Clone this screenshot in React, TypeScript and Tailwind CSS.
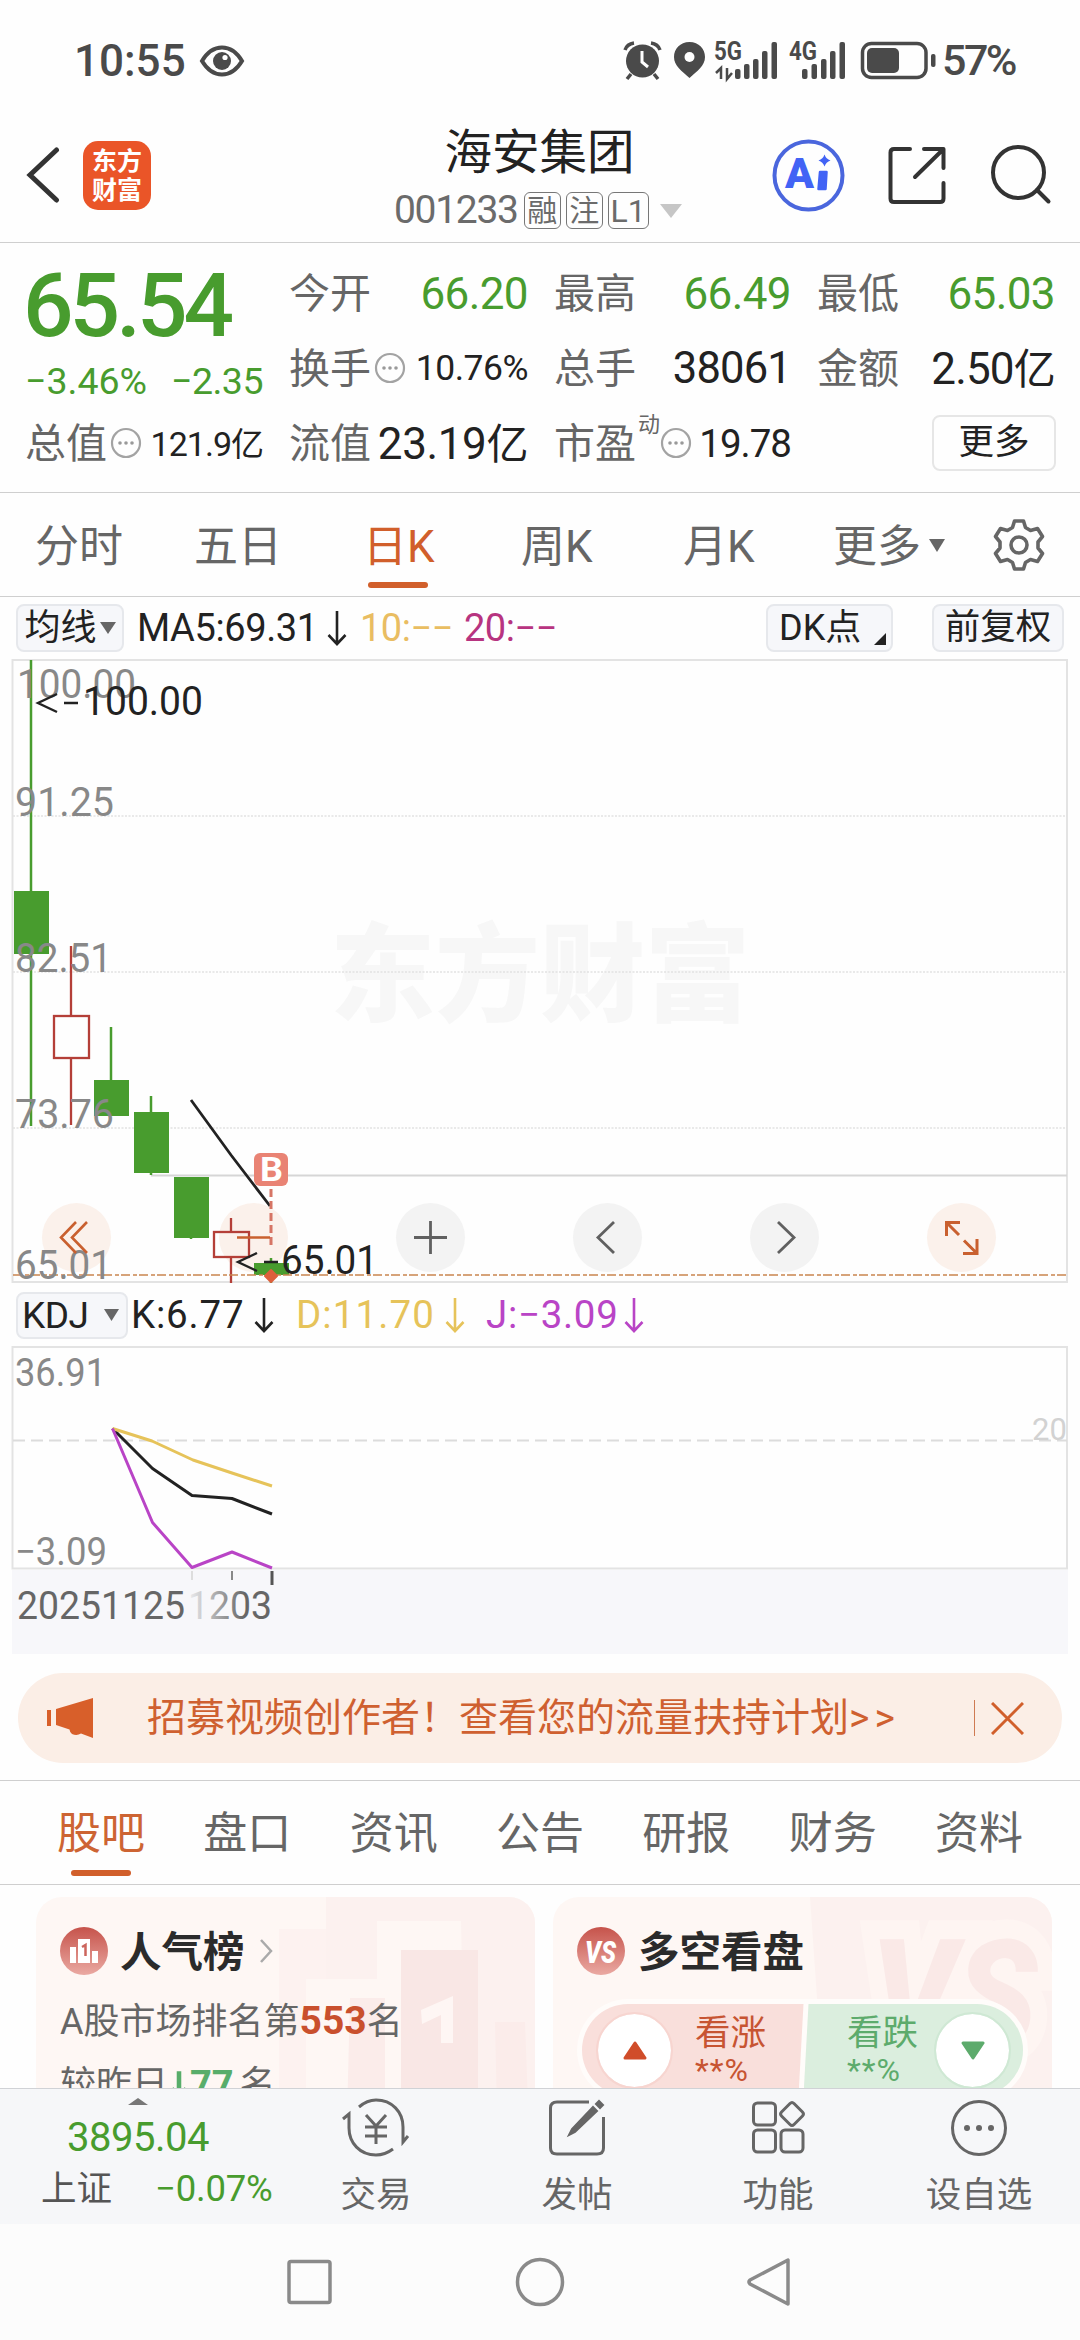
import type { ReactNode } from "react";

const MORE_DOTS = [10, 16, 22];

function Dots() {
  return (
    <svg className="h-8 w-8 shrink-0" viewBox="0 0 32 32" fill="none">
      <circle cx="16" cy="16" r="14" stroke="#a3a3a3" strokeWidth="2.2" />
      {MORE_DOTS.map((x) => (
        <circle key={x} cx={x} cy="16" r="1.8" fill="#999" />
      ))}
    </svg>
  );
}

function Caret({ className }: { className: string }) {
  return (
    <svg className={className} viewBox="0 0 16 12" preserveAspectRatio="none">
      <path d="M0 0H16L8 12Z" fill="currentColor" />
    </svg>
  );
}

function DownArrow() {
  return (
    <svg className="h-9 w-5 shrink-0" viewBox="0 0 20 36" fill="none" stroke="currentColor" strokeWidth="2.6">
      <path d="M10 1V34M1.500 25L10 34L18.500 25" />
    </svg>
  );
}

function StatusBar() {
  return (
    <div className="flex h-[84px] shrink-0 items-center pt-[37px] pl-[74px] text-[#4a4a4a]">
      <span className="text-[44px] leading-none font-medium">10:55</span>
      <svg className="ml-[13px] h-[32px] w-[46px]" viewBox="0 0 46 32" fill="none">
        <path d="M3 16C9 6 15 2.500 23 2.500S37 6 43 16C37 26 31 29.500 23 29.500S9 26 3 16Z" stroke="#4a4a4a" strokeWidth="4" />
        <circle cx="23" cy="16" r="9" fill="#4a4a4a" />
        <circle cx="26" cy="12.500" r="2.600" fill="#fff" />
      </svg>
      <svg className="ml-auto h-[44px] w-[318px]" viewBox="620 38 318 44" fill="#4a4a4a">
        {/* alarm */}
        <circle cx="640.500" cy="60" r="16.500" />
        <path d="M623 49Q625 43 632 42M658 49Q656 43 649 42M629 73L625 78M652 73L656 78" stroke="#4a4a4a" strokeWidth="3.500" fill="none" />
        <path d="M640 50V61L646 66" stroke="#fff" strokeWidth="3" fill="none" />
        {/* location */}
        <path d="M687.500 41C678 41 672 48 672 56C672 65 680 70 687.500 77C695 70 703 65 703 56C703 48 697 41 687.500 41Z" />
        <circle cx="687.500" cy="56" r="5" fill="#fff" />
        {/* signals */}
        <text x="712" y="59" fontSize="25" fontWeight="700" textLength="28" lengthAdjust="spacingAndGlyphs">5G</text>
        <path d="M714 72L719 67V78M730 72L725 78V67" stroke="#4a4a4a" strokeWidth="2.500" fill="none" />
        <rect x="733" y="68" width="5.500" height="10" rx="2" />
        <rect x="742" y="63" width="5.500" height="15" rx="2" />
        <rect x="751" y="58" width="5.500" height="20" rx="2" />
        <rect x="760" y="50" width="5.500" height="28" rx="2" />
        <rect x="769.500" y="41" width="5.500" height="37" rx="2" />
        <text x="787" y="59" fontSize="25" fontWeight="700" textLength="28" lengthAdjust="spacingAndGlyphs">4G</text>
        <rect x="800" y="68" width="5.500" height="10" rx="2" />
        <rect x="809.500" y="63" width="5.500" height="15" rx="2" />
        <rect x="819" y="58" width="5.500" height="20" rx="2" />
        <rect x="828" y="50" width="5.500" height="28" rx="2" />
        <rect x="837.500" y="41" width="5.500" height="37" rx="2" />
        {/* battery */}
        <rect x="860.500" y="42.500" width="63.500" height="34" rx="9" fill="none" stroke="#4a4a4a" strokeWidth="3.500" />
        <rect x="865" y="47" width="32" height="25" rx="5" />
        <rect x="929" y="53" width="4.500" height="13" rx="2" />
      </svg>
      <span className="mr-[65px] ml-[2px] text-[43px] leading-none font-medium tracking-[-2.5px]">57%</span>
    </div>
  );
}

function Tag({ children, wide }: { children: ReactNode; wide?: boolean }) {
  return (
    <span
      className={
        wide
          ? "flex h-[37px] w-[41px] items-center justify-center rounded-md border-[1.5px] border-[#777] text-[32px] leading-none"
          : "flex h-[37px] w-[37px] items-center justify-center rounded-md border-[1.5px] border-[#777] text-[30px] leading-none"
      }
    >
      {children}
    </span>
  );
}

function Header() {
  return (
    <div className="flex h-[159px] shrink-0 border-b border-[#cfcfcf]">
      <svg className="mt-[63px] ml-[26px] h-[56px] w-[34px]" viewBox="0 0 34 56" fill="none">
        <path d="M30.500 3L4 28L30.500 53" stroke="#333" strokeWidth="5" strokeLinecap="round" />
      </svg>
      <div className="mt-[57px] ml-[23px] flex h-[69px] w-[68px] flex-col items-center justify-center rounded-[15px] bg-[#ea5528] text-[25px] leading-[29px] font-bold text-white">
        <span>东方</span>
        <span>财富</span>
      </div>
      <div className="ml-[228px] flex w-[321px] flex-col items-center">
        <span className="mt-[45px] text-[47.5px] leading-[48px] text-[#222]">海安集团</span>
        <div className="mt-[14px] flex items-center gap-[5px] self-start pl-[15px] text-[#6b6b6b]">
          <span className="mr-[1px] text-[39px] leading-none tracking-[-1.3px]">001233</span>
          <Tag>融</Tag>
          <Tag>注</Tag>
          <Tag wide>L1</Tag>
          <Caret className="ml-[6px] h-[14px] w-[22px] text-[#c6c6c6]" />
        </div>
      </div>
      <svg className="mt-[54px] ml-[72px] h-[74px] w-[74px]" viewBox="0 0 74 74" fill="none">
        <circle cx="36.500" cy="37.500" r="34" stroke="#4a66dd" strokeWidth="4" />
        <text x="13" y="50" fontSize="42" fontWeight="900" fill="#4263f5" textLength="29" lengthAdjust="spacingAndGlyphs">A</text>
        <path d="M48 34H54.500L53.500 51H46.500Z" fill="#4263f5" stroke="#4263f5" strokeWidth="2.500" strokeLinejoin="round" />
        <path d="M52.500 16.500Q54 21 58.500 22.500Q54 24 52.500 28.500Q51 24 46.500 22.500Q51 21 52.500 16.500Z" fill="#4263f5" />
      </svg>
      <svg className="mt-[61px] ml-[41px] h-[60px] w-[60px]" viewBox="0 0 60 60" fill="none" stroke="#333" strokeWidth="4">
        <path
          d="M23 4H7Q3.500 4 3.500 7.500V53.500Q3.500 57 7 57H53Q56.500 57 56.500 53.500V38M37 4H56.500V23M56 4.500L28 32"
          strokeLinejoin="round"
          strokeLinecap="round"
        />
      </svg>
      <svg className="mt-[60px] ml-[43px] h-[62px] w-[62px]" viewBox="0 0 62 62" fill="none" stroke="#333" strokeWidth="4">
        <circle cx="28.500" cy="28.500" r="25.500" />
        <path d="M47 46L58.500 57.500" strokeLinecap="round" />
      </svg>
    </div>
  );
}

function Quote({ label, children }: { label: string; children: ReactNode }) {
  return (
    <div className="flex items-center">
      <span className="shrink-0 pt-[4px] text-[41px] leading-none text-[#666]">{label}</span>
      {children}
    </div>
  );
}

function Quotes() {
  return (
    <div className="grid h-[250px] shrink-0 grid-cols-[238px_239px_237px_238px] grid-rows-[75px_75px_75px] gap-x-[26px] border-b border-[#cfcfcf] pt-[12px] pl-[25px] whitespace-nowrap">
      <div className="row-span-2 flex flex-col text-[#489c2e]">
        <span className="mt-[11px] -ml-[2px] text-[89px] leading-[80px] font-medium tracking-[-4px]">65.54</span>
        <div className="mt-[13px] flex justify-between text-[37.5px] leading-[44px]">
          <span>−3.46%</span>
          <span className="tracking-[-0.5px]">−2.35</span>
        </div>
      </div>
      <Quote label="今开">
        <span className="ml-auto pt-[3px] text-[44px] leading-none tracking-[-0.6px] text-[#489c2e]">66.20</span>
      </Quote>
      <Quote label="最高">
        <span className="ml-auto pt-[3px] text-[44px] leading-none tracking-[-0.6px] text-[#489c2e]">66.49</span>
      </Quote>
      <Quote label="最低">
        <span className="ml-auto pt-[3px] text-[44px] leading-none tracking-[-0.6px] text-[#489c2e]">65.03</span>
      </Quote>
      <Quote label="换手">
        <span className="ml-[3px] flex">
          <Dots />
        </span>
        <span className="ml-auto pt-[3px] text-[35.5px] leading-none tracking-[-0.5px] text-[#222]">10.76%</span>
      </Quote>
      <Quote label="总手">
        <span className="ml-auto pt-[3px] text-[43.5px] leading-none tracking-[-0.8px] text-[#222]">38061</span>
      </Quote>
      <Quote label="金额">
        <span className="ml-auto pt-[3px] text-[44px] leading-none tracking-[-0.8px] text-[#222]">
          2.50<span className="text-[42px]">亿</span>
        </span>
      </Quote>
      <Quote label="总值">
        <span className="ml-[3px] flex">
          <Dots />
        </span>
        <span className="ml-auto pt-[3px] text-[34px] leading-none tracking-[-1px] text-[#222]">
          121.9<span className="text-[33px]">亿</span>
        </span>
      </Quote>
      <Quote label="流值">
        <span className="ml-auto pt-[3px] text-[44px] leading-none tracking-[-0.4px] text-[#222]">
          23.19<span className="text-[42px]">亿</span>
        </span>
      </Quote>
      <Quote label="市盈">
        <span className="mb-[36px] ml-[2px] text-[22px] leading-none text-[#666]">动</span>
        <Dots />
        <span className="ml-auto pt-[3px] text-[38.5px] leading-none tracking-[-1px] text-[#222]">19.78</span>
      </Quote>
      <div className="-mr-px ml-auto flex h-[56px] w-[124px] items-center justify-center self-center rounded-lg border-2 border-[#e6e6e6] text-[35.5px] leading-none text-[#222]">
        更多
      </div>
    </div>
  );
}

function PeriodTabs() {
  return (
    <div className="flex h-[104px] shrink-0 border-b border-[#cfcfcf] pl-[35px] text-[44px] leading-[44px] text-[#666]">
      <span className="mt-[32px] w-[159px]">分时</span>
      <span className="mt-[32px] w-[169px]">五日</span>
      <div className="flex w-[158px] flex-col text-[#d15f2b]">
        <span className="mt-[32px]">日K</span>
        <span className="mt-[13px] ml-[5px] h-[6px] w-[60px] rounded-full bg-[#d15f2b]" />
      </div>
      <span className="mt-[32px] w-[162px]">周K</span>
      <span className="mt-[32px] w-[150px]">月K</span>
      <span className="mt-[32px]">更多</span>
      <Caret className="mt-[46px] ml-[8px] h-[13px] w-[16px] text-[#666]" />
      <svg className="mt-[25px] ml-[47px] h-[54px] w-[54px]" viewBox="0 0 54 54" fill="none" stroke="#666" strokeWidth="3.600">
        <path d="M22.500 3H31.500L33.500 9.500L38.500 12.500L45.500 10.500L50.500 18.500L46 24V30L50.500 35.500L45.500 43.500L38.500 41.500L33.500 44.500L31.500 51H22.500L20.500 44.500L15.500 41.500L8.500 43.500L3.500 35.500L8 30V24L3.500 18.500L8.500 10.500L15.500 12.500L20.500 9.500Z" strokeLinejoin="round" />
        <circle cx="27" cy="27" r="8" />
      </svg>
    </div>
  );
}

function MaRow() {
  return (
    <div className="flex h-[62px] shrink-0 items-center pr-[16px] pl-[16px] text-[38px] leading-none whitespace-nowrap text-[#222]">
      <div className="flex h-[48px] w-[108px] shrink-0 items-center justify-center gap-[3px] rounded-lg border-2 border-[#e6e8ec] bg-[#f6f7fa] text-[36px]">
        <span>均线</span>
        <Caret className="h-[12px] w-[16px] text-[#666]" />
      </div>
      <span className="ml-[13px] w-[190px] tracking-[-0.4px]">MA5:69.31</span>
      <DownArrow />
      <span className="ml-[13px] w-[104px] tracking-[-0.5px] text-[#e9bd62]">10:−−</span>
      <span className="tracking-[-0.5px] text-[#b73480]">20:−−</span>
      <div className="ml-auto flex h-[48px] w-[127px] items-center rounded-lg border-2 border-[#e6e8ec] bg-[#f6f7fa] pl-[11px] text-[36px]">
        <span>DK点</span>
        <svg className="mt-[22px] ml-auto mr-[5px] h-[12px] w-[12px]" viewBox="0 0 12 12">
          <path d="M12 0V12H0Z" fill="#222" />
        </svg>
      </div>
      <div className="ml-[39px] flex h-[48px] w-[132px] items-center justify-center rounded-lg border-2 border-[#e6e8ec] bg-[#f6f7fa] text-[35.5px]">
        前复权
      </div>
    </div>
  );
}

type Candle = { x: number; high: number; low: number; top: number; bottom: number; up?: boolean };

const candles: Candle[] = [
  { x: 31, high: 660, low: 1126, top: 891, bottom: 954 },
  { x: 71, high: 946, low: 1125, top: 1016, bottom: 1058, up: true },
  { x: 111, high: 1027, low: 1116, top: 1080, bottom: 1116 },
  { x: 151, high: 1096, low: 1175, top: 1112, bottom: 1173 },
  { x: 191, high: 1177, low: 1239, top: 1177, bottom: 1238 },
  { x: 231, high: 1218, low: 1283, top: 1232, bottom: 1257, up: true },
  { x: 271, high: 1258, low: 1283, top: 1263, bottom: 1275 },
];

const gridLines = [816, 972, 1128];

const priceLabels = [
  { text: "100.00", x: 17, y: 698, w: 119 },
  { text: "91.25", x: 15, y: 816, w: 99 },
  { text: "82.51", x: 15, y: 972, w: 97 },
  { text: "73.76", x: 15, y: 1128, w: 99 },
  { text: "65.01", x: 15, y: 1279, w: 97 },
];

const toolButtons = [
  { x: 76.5, warm: true },
  { x: 253.5, warm: true },
  { x: 430.5 },
  { x: 607.5 },
  { x: 784.5 },
  { x: 961.5, warm: true },
];

function KLineChart() {
  return (
    <svg className="h-[625px] w-full shrink-0" viewBox="0 659 1080 625" fill="none">
      <text x="330" y="1013" fontSize="107" fontWeight="900" fill="#f7f7f7" textLength="420" lengthAdjust="spacingAndGlyphs">
        东方财富
      </text>
      <rect x="12.500" y="660" width="1054.500" height="622" stroke="#e3e3e3" strokeWidth="2" />
      {gridLines.map((y) => (
        <path key={y} d={`M13 ${y}H1067`} stroke="#e2e2e2" strokeWidth="1.500" strokeDasharray="2 1.500" />
      ))}
      <path d="M151 1175.500H1067" stroke="#d6d6d6" strokeWidth="2" />
      {toolButtons.map(({ x, warm }) => (
        <circle key={x} cx={x} cy="1237.500" r="34.500" fill={warm ? "#fbf1eb" : "#f3f3f3"} />
      ))}

      {candles.map((c) =>
        c.up ? (
          <g key={c.x} stroke="#b43f38" strokeWidth="2.300">
            <path d={`M${c.x} ${c.high}V${c.top}M${c.x} ${c.bottom}V${c.low}`} />
            <rect x={c.x - 17} y={c.top} width="35" height={c.bottom - c.top} />
          </g>
        ) : (
          <g key={c.x}>
            <path d={`M${c.x} ${c.high}V${c.low}`} stroke="#489c2e" strokeWidth="2.500" />
            <rect x={c.x - 17} y={c.top} width="35" height={c.bottom - c.top} fill="#489c2e" />
          </g>
        ),
      )}
      <path d="M13 1275H1067" stroke="#c9854f" strokeWidth="1.600" strokeDasharray="9 3 4 2" />

      {priceLabels.map((l) => (
        <text key={l.text} x={l.x} y={l.y} fontSize="40" fill="#888" textLength={l.w} lengthAdjust="spacingAndGlyphs">
          {l.text}
        </text>
      ))}
      <path d="M191 1100L231 1155L270 1206" stroke="#222" strokeWidth="2.800" />

      {/* buy marker */}
      <path d="M271 1189V1246" stroke="#d67565" strokeWidth="3" strokeDasharray="8 4" />
      <rect x="254" y="1153" width="34" height="33" rx="6" fill="#e98374" />
      <text x="260" y="1181" fontSize="33" fontWeight="700" fill="#fff" textLength="23" lengthAdjust="spacingAndGlyphs">B</text>
      <path d="M271 1270L277 1276L271 1282L265 1276Z" fill="#dd5f3c" stroke="#dd5f3c" strokeWidth="2" strokeLinejoin="round" />

      {/* high and low callouts */}
      <g stroke="#222" strokeWidth="2.400">
        <path d="M57 694L38 703L57 712M64 703H78" />
        <path d="M257 1253L238 1262L257 1271M264 1262H278" />
      </g>
      <text x="83" y="715" fontSize="40" fill="#222" textLength="120" lengthAdjust="spacingAndGlyphs">100.00</text>
      <text x="281" y="1274" fontSize="40" fill="#222" textLength="97" lengthAdjust="spacingAndGlyphs">65.01</text>

      {/* tool button glyphs */}
      <g stroke="#c9602f" strokeWidth="2.600">
        <path d="M76 1222L61 1237.500L76 1253M87 1222L72 1237.500L87 1253" />
        <path d="M237 1237.500H270" />
        <path d="M960 1222.500H946.500V1236M947 1223L959 1235M963 1253.500H977V1239M976.500 1253L964 1240.500" strokeWidth="3" />
      </g>
      <g stroke="#606060" strokeWidth="2.800">
        <path d="M414 1237.500H447M430.500 1221V1254" />
        <path d="M614 1222L598 1237.500L614 1253" />
        <path d="M778 1222L794 1237.500L778 1253" />
      </g>
    </svg>
  );
}

function KdjRow() {
  return (
    <div className="flex h-[62px] shrink-0 items-center pl-[16px] text-[38.5px] leading-none whitespace-nowrap">
      <div className="flex h-[47px] w-[112px] shrink-0 items-center rounded-lg border-2 border-[#e6e8ec] bg-[#f6f7fa] pl-[4px] text-[37px] text-[#222]">
        <span className="tracking-[-0.5px]">KDJ</span>
        <Caret className="ml-auto mr-[7px] h-[12px] w-[15px] text-[#666]" />
      </div>
      <div className="ml-[3px] flex w-[165px] items-center text-[#222]">
        <span className="w-[123px] tracking-[0.8px]">K:6.77</span>
        <DownArrow />
      </div>
      <div className="flex w-[190px] items-center text-[#e6c35a]">
        <span className="w-[149px] tracking-[1.1px]">D:11.70</span>
        <DownArrow />
      </div>
      <div className="flex items-center text-[#b944c6]">
        <span className="w-[138px] tracking-[0.7px]">J:−3.09</span>
        <DownArrow />
      </div>
    </div>
  );
}

function KdjChart() {
  return (
    <svg className="h-[308px] w-full shrink-0" viewBox="0 1346 1080 308" fill="none">
      <defs>
        <linearGradient id="dateFade" gradientUnits="userSpaceOnUse" x1="192" y1="0" x2="245" y2="0">
          <stop offset="0" stopColor="#e4e4e6" />
          <stop offset="1" stopColor="#666" />
        </linearGradient>
      </defs>
      <rect x="12" y="1570" width="1056" height="84" fill="#f7f7fa" />
      <rect x="12.500" y="1347" width="1054.500" height="221.500" stroke="#e3e3e3" strokeWidth="2" />
      <path d="M13 1440.500H1067" stroke="#dcdcdc" strokeWidth="2" strokeDasharray="12 6" />
      <g fontSize="38.500" fill="#888">
        <text x="15" y="1386" textLength="91" lengthAdjust="spacingAndGlyphs">36.91</text>
        <text x="15" y="1565" textLength="92" lengthAdjust="spacingAndGlyphs">−3.09</text>
      </g>
      <text x="1032" y="1440" fontSize="31" fill="#d2d2d2">20</text>
      <g strokeWidth="3" strokeLinejoin="round">
        <path d="M112.500 1428.500L152.500 1468.500L192 1495.500L232 1498.500L272 1514" stroke="#222" />
        <path d="M112.500 1428.500L152 1441L193 1460L232 1473L272 1486" stroke="#e6c35a" />
        <path d="M112.500 1428.500L152.500 1522.500L192 1567.500L232 1552L272 1568" stroke="#b944c6" />
      </g>
      <path d="M192 1571V1580" stroke="#ddd" strokeWidth="2" />
      <path d="M232 1571V1580" stroke="#888" strokeWidth="2" />
      <path d="M272 1571V1585" stroke="#555" strokeWidth="3" />
      <text x="17" y="1619" fontSize="38" fill="#666" textLength="168" lengthAdjust="spacingAndGlyphs">20251125</text>
      <text x="188" y="1619" fontSize="38" fill="url(#dateFade)" textLength="84" lengthAdjust="spacingAndGlyphs">1203</text>
    </svg>
  );
}

function Banner() {
  return (
    <div className="h-[127px] shrink-0 border-b border-[#cfcfcf] px-[18px] pt-[19px]">
      <div className="flex h-[90px] items-center rounded-full bg-[#fbeee6] pr-[38px] pl-[29px] text-[#cf6030]">
        <svg className="h-[40px] w-[47px]" viewBox="0 0 47 40" fill="#d85f2a">
          <path d="M0 12H4V28H0ZM9 11L46 0V40L34 35.500Q30 38 25 36Q23 35 22.500 31.500L9 27Z" />
        </svg>
        <span className="ml-[53px] text-[39px] leading-none whitespace-nowrap">
          招募视频创作者！查看您的流量扶持计划<span className="tracking-[5px]">&gt;&gt;</span>
        </span>
        <span className="ml-auto h-[36px] w-[1.5px] bg-[#cf7a52]" />
        <svg className="ml-[16px] h-[33px] w-[33px]" viewBox="0 0 33 33" fill="none">
          <path d="M1 1L32 32M32 1L1 32" stroke="#d15f2b" strokeWidth="3" />
        </svg>
      </div>
    </div>
  );
}

const infoTabs = ["股吧", "盘口", "资讯", "公告", "研报", "财务", "资料"];

function InfoTabs() {
  return (
    <div className="flex h-[104px] shrink-0 justify-between border-b border-[#cfcfcf] px-[57px] text-[44px] leading-[44px] text-[#666]">
      {infoTabs.map((tab, i) => (
        <div key={tab} className={i === 0 ? "flex flex-col items-center pt-[31px] text-[#cd6433]" : "pt-[31px]"}>
          <span>{tab}</span>
          {i === 0 && <span className="mt-[14px] h-[6px] w-[60px] rounded-full bg-[#d15f2b]" />}
        </div>
      ))}
    </div>
  );
}

function RankCard() {
  return (
    <div className="relative h-[260px] w-[499px] shrink-0 overflow-hidden rounded-[26px] bg-[#fef7f4]">
      <svg className="absolute inset-0 h-full w-full" viewBox="0 0 499 260" fill="none">
        <path d="M290 0H499V260H430L425 24H341V82H290Z" fill="#fcf1ef" />
        <path d="M243 32H290V82H270V260H243Z" fill="#fdf2f0" />
        <path d="M365 53H442V260H365Z" fill="#f9e7e5" />
        <path d="M314 101H349V260H310Z" fill="#fbecea" />
        <path d="M459 125H489L494 260H462Z" fill="#fbecea" />
        <path d="M385 113L417 99V146H405V118L386 127Z" fill="#fef6f4" />
      </svg>
      <div className="relative pt-[30px] pl-[24px]">
        <div className="flex h-[48px] items-center">
          <svg className="h-[48px] w-[48px]" viewBox="0 0 48 48">
            <defs>
              <linearGradient id="rankBadge" x1="0" y1="0" x2="0" y2="1">
                <stop offset="0" stopColor="#c6534b" />
                <stop offset="1" stopColor="#eaa9a2" />
              </linearGradient>
            </defs>
            <circle cx="24" cy="24" r="24" fill="url(#rankBadge)" />
            <path d="M10 20H16V36H10ZM18 12H30V36H18ZM32 24H38V36H32Z" fill="#fff" />
            <path d="M22 20L25.500 18V29" stroke="#cc655d" strokeWidth="2.500" fill="none" />
          </svg>
          <span className="ml-[12px] pt-[3px] text-[41.5px] leading-none font-bold text-[#2b2b2b]">人气榜</span>
          <svg className="ml-[14px] h-[24px] w-[14px]" viewBox="0 0 14 24" fill="none">
            <path d="M2 1L12 12L2 23" stroke="#aaa" strokeWidth="2.500" />
          </svg>
        </div>
        <p className="mt-[25px] h-[42px] text-[36px] leading-[42px] whitespace-nowrap text-[#666]">
          A股市场排名第<b className="text-[39px] text-[#c9502d]">553</b>名
        </p>
        <p className="mt-[22px] flex h-[42px] items-center text-[36px] leading-[42px] whitespace-nowrap text-[#666]">
          较昨日
          <svg className="mx-[1px] h-[30px] w-[20px]" viewBox="0 0 22 30" fill="none">
            <path d="M11 0V28M3 19L11 28L19 19" stroke="#58ad6a" strokeWidth="5" />
          </svg>
          <b className="mr-[6px] text-[38px] text-[#58ad6a]">77</b>名
        </p>
      </div>
    </div>
  );
}

function VoteCard() {
  return (
    <div className="relative h-[260px] w-[499px] shrink-0 overflow-hidden rounded-[26px] bg-[#fef7f4]">
      <svg className="absolute inset-0 h-full w-full" viewBox="0 0 499 260" fill="none">
        <path d="M257 0H499V260H275Z" fill="#fcf1ef" />
        <text
          x="318"
          y="149"
          fontSize="150"
          fontWeight="900"
          fontStyle="italic"
          fill="#fae9e7"
          stroke="#fef5f2"
          strokeWidth="38"
          paintOrder="stroke"
          textLength="166"
          lengthAdjust="spacingAndGlyphs"
        >
          VS
        </text>
      </svg>
      <div className="relative pt-[30px] pl-[24px]">
        <div className="flex h-[48px] items-center">
          <svg className="h-[48px] w-[48px]" viewBox="0 0 48 48">
            <circle cx="24" cy="24" r="24" fill="url(#rankBadge)" />
            <text x="8" y="35.500" fontSize="31" fontWeight="900" fontStyle="italic" fill="#fff" textLength="31" lengthAdjust="spacingAndGlyphs">VS</text>
          </svg>
          <span className="ml-[13px] pt-[3px] text-[41.5px] leading-none font-bold text-[#2b2b2b]">多空看盘</span>
        </div>
        <div className="mt-[24px] flex h-[102px] w-[451px] rounded-full bg-[#fffcfa] p-[5px]">
          <div className="flex flex-1 items-center rounded-l-full bg-[#f9dfdb] pl-[16px] text-[#c75432] [clip-path:polygon(0_0,100%_0,calc(100%-5px)_100%,0_100%)]">
            <span className="flex h-[73px] w-[73px] items-center justify-center rounded-full bg-white outline-2 outline-[#f7d5d0]">
              <svg className="h-[19px] w-[24px]" viewBox="0 0 24 19">
                <path d="M12 2L22 17H2Z" fill="#d04d2a" stroke="#d04d2a" strokeWidth="3" strokeLinejoin="round" />
              </svg>
            </span>
            <div className="ml-[24px] flex flex-col">
              <span className="text-[35.5px] leading-[40px]">看涨</span>
              <span className="text-[32px] leading-[34px] tracking-[1px]">**%</span>
            </div>
          </div>
          <div className="flex flex-1 items-center justify-end rounded-r-full bg-[#dbeede] pr-[14px] text-[#5dab6c] [clip-path:polygon(5px_0,100%_0,100%_100%,0_100%)]">
            <div className="mr-[18px] flex flex-col">
              <span className="text-[35.5px] leading-[40px]">看跌</span>
              <span className="text-[32px] leading-[34px] tracking-[1px]">**%</span>
            </div>
            <span className="flex h-[73px] w-[73px] items-center justify-center rounded-full bg-white outline-2 outline-[#cfe8d4]">
              <svg className="h-[19px] w-[24px]" viewBox="0 0 24 19">
                <path d="M12 17L22 2H2Z" fill="#5dab6c" stroke="#5dab6c" strokeWidth="3" strokeLinejoin="round" />
              </svg>
            </span>
          </div>
        </div>
      </div>
    </div>
  );
}

function BarItem({ label, className, children }: { label: string; className: string; children: ReactNode }) {
  return (
    <div className={className}>
      <svg className="h-[60px] w-[68px]" viewBox="0 0 68 60" fill="none" stroke="#666" strokeWidth="3">
        {children}
      </svg>
      <span className="mt-[19px] text-[35.5px] leading-[36px] text-[#666]">{label}</span>
    </div>
  );
}

function BottomBar() {
  return (
    <div className="flex h-[136px] shrink-0 border-t border-[#d0d2d6] bg-[#f6f7f9] whitespace-nowrap">
      <div className="flex w-[308px] flex-col pl-[41px]">
        <svg className="mt-[9px] ml-[87px] h-[7px] w-[20px]" viewBox="0 0 20 7">
          <path d="M10 0L20 7H0Z" fill="#777" />
        </svg>
        <span className="mt-[14px] ml-[26px] text-[40px] leading-[38px] tracking-[-0.5px] text-[#489c2e]">3895.04</span>
        <div className="mt-[14px] flex items-center leading-[36px]">
          <span className="text-[35.5px] text-[#555]">上证</span>
          <span className="ml-[43px] text-[36.5px] tracking-[-0.2px] text-[#489c2e]">−0.07%</span>
        </div>
      </div>
      <BarItem label="交易" className="flex w-[136px] flex-col items-center pt-[9px]">
        <path d="M17 9Q25 2 34 2C50 2 61 14 61 29V44L66 38M51 51Q43 57 34 57C18 57 7 45 7 30V16L1 21" />
        <path d="M24 17L34 28L44 17M34 28V46M23 29H45M23 38H45" />
      </BarItem>
      <BarItem label="发帖" className="ml-[65px] flex w-[136px] flex-col items-center pt-[9px]">
        <path d="M46 4H14Q7.500 4 7.500 10V50Q7.500 56 14 56H54Q60.500 56 60.500 50V19" />
        <path d="M26 37L29 31L50 9L54 13L32 34ZM53 6L56 3L60 7L57 10Z" fill="#666" strokeWidth="2" />
      </BarItem>
      <BarItem label="功能" className="ml-[65px] flex w-[136px] flex-col items-center pt-[9px]">
        <rect x="9.500" y="5" width="22" height="22" rx="4" />
        <rect x="9.500" y="32" width="22" height="22" rx="4" />
        <rect x="37" y="32" width="22" height="22" rx="4" />
        <path d="M46 5.500Q48 3.500 50 5.500L58.500 14Q60.500 16 58.500 18L50 26.500Q48 28.500 46 26.500L37.500 18Q35.500 16 37.500 14Z" />
      </BarItem>
      <BarItem label="设自选" className="ml-[65px] flex w-[136px] flex-col items-center pt-[9px]">
        <circle cx="34" cy="30" r="26.500" />
        <g fill="#666" stroke="none">
          <circle cx="22" cy="30" r="3" />
          <circle cx="34" cy="30" r="3" />
          <circle cx="46" cy="30" r="3" />
        </g>
      </BarItem>
    </div>
  );
}

function SystemNav() {
  return (
    <div className="flex h-[116px] shrink-0 items-center bg-[#fcfcfc] pl-[286px]">
      <svg className="h-[50px] w-[506px]" viewBox="286 2257 506 50" fill="none" stroke="#8a8a8a" strokeWidth="3.500">
        <rect x="289" y="2261.500" width="41" height="41" rx="2" />
        <circle cx="540" cy="2282" r="22.500" />
        <path d="M788 2260V2304L750 2284Q748 2282 750 2280Z" strokeLinejoin="round" />
      </svg>
    </div>
  );
}

export default function App() {
  return (
    <div className="flex h-[2340px] w-[1080px] flex-col overflow-hidden bg-[#fefefe] font-['Roboto','Noto_Sans_CJK_SC',sans-serif]">
      <StatusBar />
      <Header />
      <Quotes />
      <PeriodTabs />
      <MaRow />
      <KLineChart />
      <KdjRow />
      <KdjChart />
      <Banner />
      <InfoTabs />
      <div className="flex h-[203px] shrink-0 gap-[18px] overflow-hidden pt-[12px] pl-[36px]">
        <RankCard />
        <VoteCard />
      </div>
      <BottomBar />
      <SystemNav />
    </div>
  );
}
